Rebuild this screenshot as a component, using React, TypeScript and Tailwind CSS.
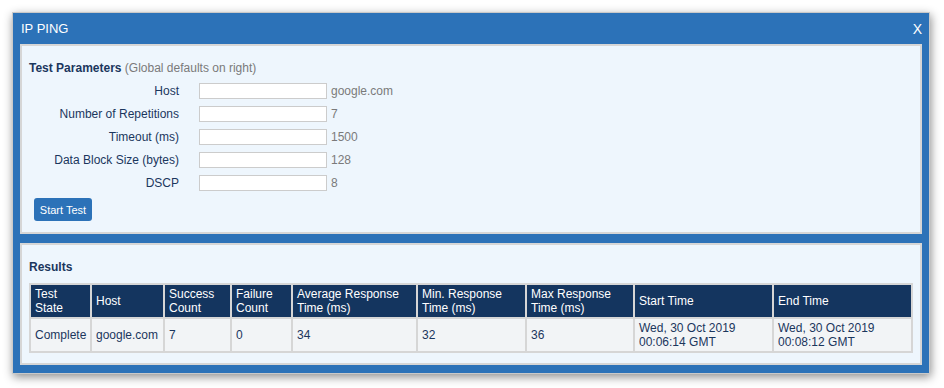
const params = [
  { label: "Host", value: "google.com" },
  { label: "Number of Repetitions", value: "7" },
  { label: "Timeout (ms)", value: "1500" },
  { label: "Data Block Size (bytes)", value: "128" },
  { label: "DSCP", value: "8" },
];

const columns = [
  { title: ["Test", "State"], width: "w-[59px]" },
  { title: ["Host"], width: "w-[71px]" },
  { title: ["Success", "Count"], width: "w-[65px]" },
  { title: ["Failure", "Count"], width: "w-[59px]" },
  { title: ["Average Response", "Time (ms)"], width: "w-[123px]" },
  { title: ["Min. Response", "Time (ms)"], width: "w-[107px]" },
  { title: ["Max Response", "Time (ms)"], width: "w-[106px]" },
  { title: ["Start Time"], width: "w-[137px]" },
  { title: ["End Time"], width: "w-[137px]" },
];

const row = [
  ["Complete"],
  ["google.com"],
  ["7"],
  ["0"],
  ["34"],
  ["32"],
  ["36"],
  ["Wed, 30 Oct 2019", "00:06:14 GMT"],
  ["Wed, 30 Oct 2019", "00:08:12 GMT"],
];

export default function App() {
  return (
    <div className="min-h-[388px] bg-white p-[12px] font-['Liberation_Sans',Arial,sans-serif]">
      <div className="w-[918px] h-[362px] border border-[#c9c9c9] bg-[#2c72b8] shadow-[1px_3px_9px_rgba(0,0,0,0.45)] flex flex-col">
        {/* Title bar */}
        <div className="h-[31px] flex items-center justify-between pl-[8px] pr-[7px] text-white text-[13px] leading-none">
          <span>IP PING</span>
          <span className="text-[14px]">X</span>
        </div>

        <div className="flex flex-col gap-[9px] px-[7px]">
          {/* Test parameters */}
          <div className="h-[190px] border-2 border-[#d6d6d6] bg-[#eef6fd] pt-[15px] px-[7px] text-[12px] leading-[14px]">
            <div>
              <span className="font-bold text-[#1b365d]">Test Parameters</span>{" "}
              <span className="text-[#7a7a7a]">(Global defaults on right)</span>
            </div>
            <div className="mt-[8px] flex flex-col gap-[7px]">
              {params.map((p) => (
                <div key={p.label} className="flex items-center h-[16px]">
                  <label className="w-[150px] text-right text-[#1b365d]">{p.label}</label>
                  <input
                    type="text"
                    className="ml-[20px] w-[128px] h-[16px] border border-[#cccccc] bg-white outline-none"
                  />
                  <span className="ml-[4px] text-[#7a7a7a]">{p.value}</span>
                </div>
              ))}
            </div>
            <button
              type="button"
              className="mt-[7px] ml-[5px] w-[58px] h-[23px] rounded-[3px] bg-[#2c72b8] text-white text-[11px]"
            >
              Start Test
            </button>
          </div>

          {/* Results */}
          <div className="h-[122px] border-2 border-[#d6d6d6] bg-[#eef6fd] pt-[15px] px-[7px] text-[12px] leading-[14px]">
            <div className="font-bold text-[#1b365d]">Results</div>
            <table className="mt-[9px] w-[884px] table-fixed border-separate border-spacing-[2px] bg-[#d6d6d6]">
              <colgroup>
                {columns.map((c, i) => (
                  <col key={i} className={c.width} />
                ))}
              </colgroup>
              <thead>
                <tr>
                  {columns.map((c, i) => (
                    <th
                      key={i}
                      className="h-[32px] bg-[#14355f] px-[4px] text-left align-middle font-normal text-white"
                    >
                      {c.title.map((t) => (
                        <div key={t}>{t}</div>
                      ))}
                    </th>
                  ))}
                </tr>
              </thead>
              <tbody>
                <tr>
                  {row.map((cell, i) => (
                    <td key={i} className="h-[32px] bg-[#f2f4f6] px-[4px] align-middle text-[#1b365d]">
                      {cell.map((t) => (
                        <div key={t}>{t}</div>
                      ))}
                    </td>
                  ))}
                </tr>
              </tbody>
            </table>
          </div>
        </div>
      </div>
    </div>
  );
}
